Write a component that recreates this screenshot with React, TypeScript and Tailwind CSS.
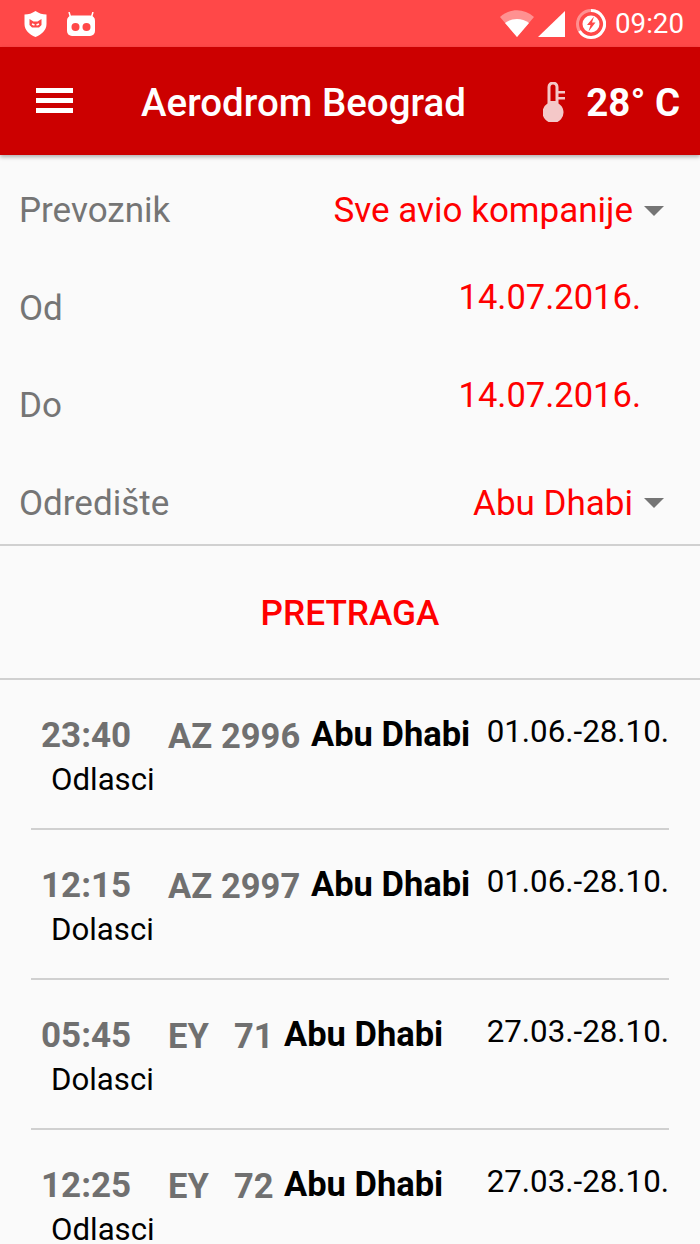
type Flight = {
  time: string;
  code: string;
  number: string;
  dest: string;
  dates: string;
  kind: string;
};

const flights: Flight[] = [
  { time: "23:40", code: "AZ", number: "2996", dest: "Abu Dhabi", dates: "01.06.-28.10.", kind: "Odlasci" },
  { time: "12:15", code: "AZ", number: "2997", dest: "Abu Dhabi", dates: "01.06.-28.10.", kind: "Dolasci" },
  { time: "05:45", code: "EY", number: "71", dest: "Abu Dhabi", dates: "27.03.-28.10.", kind: "Dolasci" },
  { time: "12:25", code: "EY", number: "72", dest: "Abu Dhabi", dates: "27.03.-28.10.", kind: "Odlasci" },
];

function StatusBar() {
  return (
    <div className="flex h-[47px] items-center bg-[#ff4848] pl-6 pr-4 text-white">
      <svg width="23" height="26" viewBox="0 0 23 26" className="mr-[20px]">
        <path d="M11.500 0C15 2.500 18.500 3.500 22.500 3.500V13c0 6-4.500 10.500-11 13C5 23.500.5 19 .5 13V3.500C4.500 3.500 8 2.500 11.500 0z" fill="#fff" />
        <path d="M5.500 8l4 2.500h4l4-2.500v6l-2.500 2.500H8l-2.500-2.500z" fill="#ff4848" />
        <path d="M8 13l2.500 1M15 13l-2.500 1" stroke="#fff" strokeWidth="1.500" />
      </svg>
      <svg width="28" height="24" viewBox="0 0 28 24">
        <path d="M2 0l1.500 5M26 0l-1.500 5" stroke="#fff" strokeWidth="1.500" />
        <rect x="0" y="3.500" width="28" height="20.500" rx="5" fill="#fff" />
        <circle cx="8.500" cy="15" r="4" fill="#ff4848" />
        <circle cx="19.500" cy="15" r="4" fill="#ff4848" />
      </svg>
      <div className="ml-auto flex items-center">
        <svg width="34" height="27" viewBox="0 0 34 27" className="mr-[4px]">
          <path d="M0 7C10-2 24-2 34 7L17 27z" fill="#fff" opacity="0.4" />
          <path d="M5 13c7-5.500 17-5.500 24 0L17 27z" fill="#fff" />
        </svg>
        <svg width="27" height="26" viewBox="0 0 27 26" className="mr-[11px]">
          <path d="M27 0v26H0z" fill="#fff" />
        </svg>
        <svg width="30" height="30" viewBox="0 0 30 30" className="mr-[9px]">
          <circle cx="15" cy="15" r="13.500" fill="none" stroke="#fff" strokeOpacity="0.4" strokeWidth="3" />
          <path d="M15 1.500a13.500 13.500 0 1 1-11.500 20.500" fill="none" stroke="#fff" strokeWidth="3" />
          <circle cx="15" cy="15" r="8.500" fill="#fff" />
          <path d="M18 7.500l-7 8.500h3.500l-2 6.500 7-9h-3.500z" fill="#ff4848" />
        </svg>
        <span className="text-[27.700px] leading-none">09:20</span>
      </div>
    </div>
  );
}

function AppBar() {
  return (
    <div className="relative flex h-[108px] items-center bg-[#cc0000] pl-[36px] pr-5 text-white shadow-[0_2px_4px_rgba(0,0,0,0.3)]">
      <svg width="37" height="25" viewBox="0 0 37 25" className="mb-[1px]">
        <path d="M0 0h37v5H0zM0 10h37v5H0zM0 20h37v5H0z" fill="#fff" />
      </svg>
      <span className="ml-[68px] pt-[5px] text-[38.500px] font-medium leading-none">Aerodrom Beograd</span>
      <div className="ml-auto flex items-center">
        <svg width="22" height="40" viewBox="0 0 22 40" className="mr-[21px] mt-[1px]">
          <path d="M4.500 5a5.500 5.500 0 0 1 11 0v16.500a10.500 10.500 0 1 1-11 0z" fill="#f4c8c8" />
          <path d="M7.500 5a2.500 2.500 0 0 1 5 0v14h-5z" fill="#cc0000" />
          <path d="M15 9h7v2.500h-7zM15 15h7v2.500h-7z" fill="#f4c8c8" />
        </svg>
        <span className="pt-[5px] text-[38.400px] font-bold leading-none">28° C</span>
      </div>
    </div>
  );
}

function Caret() {
  return <div className="ml-[11px] mr-[36px] h-0 w-0 border-x-[10px] border-t-[10px] border-x-transparent border-t-[#757575]" />;
}

function FormRow({ label, children }: { label: string; children: React.ReactNode }) {
  return (
    <div className="flex h-[97.500px] items-center justify-between pl-[19px]">
      <span className="text-[35px] leading-none text-[#757575]">{label}</span>
      {children}
    </div>
  );
}

function FlightRow({ flight, last }: { flight: Flight; last: boolean }) {
  const short = flight.number.length < 3;
  return (
    <div className={`mx-[31px] h-[150px] ${last ? "" : "border-b-2 border-[#d0d0d0]"}`}>
      <div className="flex items-start pt-[36px]">
        <div className="w-[137px] pl-[10px]">
          <div className="text-[35px] font-bold leading-[40px] text-[#707070]">{flight.time}</div>
          <div className="pl-[10px] pt-[6px] text-[31.200px] leading-[36px] text-black">{flight.kind}</div>
        </div>
        <div className={`flex text-[34.500px] font-bold leading-[40px] text-[#707070] ${short ? "w-[116px]" : "w-[143px]"}`}>
          <span className={short ? "w-[66px]" : "w-[53px]"}>{flight.code}</span>
          <span>{flight.number}</span>
        </div>
        <span className="-mt-[2px] text-[34.500px] font-bold leading-[40px] text-black">{flight.dest}</span>
        <span className="ml-auto -mt-[4px] text-[31.300px] leading-[40px] text-black">{flight.dates}</span>
      </div>
    </div>
  );
}

export default function App() {
  return (
    <div className="h-[1244px] w-[700px] overflow-hidden bg-[#fafafa] font-['Roboto',sans-serif]">
      <StatusBar />
      <AppBar />
      <div className="h-[389px] pt-[7px]">
        <FormRow label="Prevoznik">
          <div className="flex items-center">
            <span className="text-[35px] leading-none text-[#ff0000]">Sve avio kompanije</span>
            <Caret />
          </div>
        </FormRow>
        <FormRow label="Od">
          <span className="mb-[22px] mr-[59px] text-[34.500px] leading-none text-[#ff0000]">14.07.2016.</span>
        </FormRow>
        <FormRow label="Do">
          <span className="mb-[22px] mr-[59px] text-[34.500px] leading-none text-[#ff0000]">14.07.2016.</span>
        </FormRow>
        <FormRow label="Odredište">
          <div className="flex items-center">
            <span className="text-[35px] leading-none text-[#ff0000]">Abu Dhabi</span>
            <Caret />
          </div>
        </FormRow>
      </div>
      <div className="flex h-[136px] items-center justify-center border-y-2 border-[#d0d0d0] pt-[2px] text-[35.200px] font-medium text-[#ff0000]">
        PRETRAGA
      </div>
      {flights.map((f, i) => (
        <FlightRow key={f.time} flight={f} last={i === flights.length - 1} />
      ))}
    </div>
  );
}
